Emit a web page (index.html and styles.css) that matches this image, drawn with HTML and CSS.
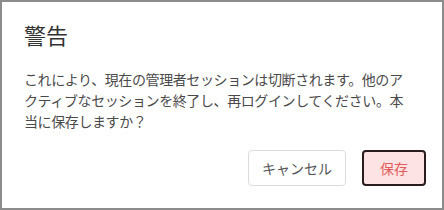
FILE: index.html
```html
<!DOCTYPE html>
<html lang="ja">
<head>
    <meta charset="UTF-8">
    <meta name="viewport" content="width=device-width, initial-scale=1.0">
    <title>警告</title>
    <link rel="stylesheet" href="styles.css">
</head>
<body>
    <div class="dialog">
        <h2 class="dialog-title">警告</h2>
        <p class="dialog-text">これにより、現在の管理者セッションは切断されます。他のア<br>クティブなセッションを終了し、再ログインしてください。本<br>当に保存しますか？</p>
        <div class="dialog-actions">
            <button class="btn btn-cancel">キャンセル</button>
            <button class="btn btn-save">保存</button>
        </div>
    </div>
</body>
</html>
```

FILE: styles.css
```css
* {
    margin: 0;
    padding: 0;
    box-sizing: border-box;
}

body {
    font-family: 'Noto Sans CJK JP', 'Noto Sans', sans-serif;
    background-color: #fff;
    color: #444;
}

/* Dialog */
.dialog {
    width: 444px;
    height: 210px;
    border: 2px solid #8c8c8c;
    padding: 16px 16px 0 22px;
    background-color: #fff;
}

.dialog-title {
    font-size: 22px;
    font-weight: normal;
    line-height: 33px;
    color: #333;
}

.dialog-text {
    margin-top: 18px;
    font-size: 14px;
    line-height: 21px;
    letter-spacing: -0.4px;
    color: #4a4a4a;
    white-space: nowrap;
}

.dialog-actions {
    display: flex;
    justify-content: flex-end;
    gap: 16px;
    margin-top: 18px;
}

.btn {
    font-family: inherit;
    font-size: 14px;
    line-height: 20px;
    border-radius: 4px;
    cursor: pointer;
}

.btn-cancel {
    padding: 6px 13px;
    background-color: #fff;
    color: #555;
    border: 1px solid #dcdcdc;
}

.btn-save {
    padding: 6px 16px;
    background-color: #fde3e3;
    color: #e25c5c;
    border: 2px solid #2a1c1c;
}
```
